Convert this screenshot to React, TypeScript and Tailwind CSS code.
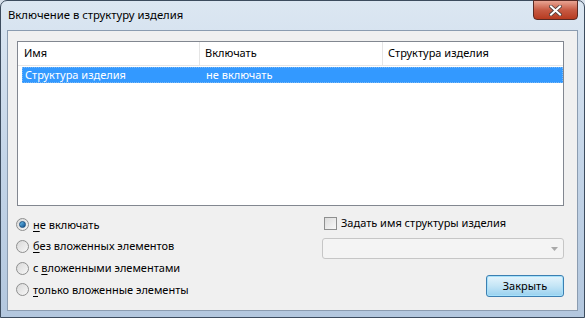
import React from 'react'

const font = { fontFamily: '"Noto Sans", "Open Sans", sans-serif' }

const Radio = ({ checked, label, u }: { checked?: boolean; label: string; u: number }) => (
    <div className="flex h-[21.7px] items-center">
        <div className="relative ml-[8px] size-[13px] rounded-full border border-[#8e8f8f] bg-gradient-to-br from-[#d9d9d9] to-[#f7f7f7]">
            {checked && (
                <div className="absolute left-[2px] top-[2px] size-[7px] rounded-full bg-gradient-to-br from-[#6dc3f0] to-[#0d4f8c] border border-[#1c5180]"></div>
            )}
        </div>
        <span className="ml-[4px] text-[11px] text-black">
            {label.slice(0, u)}
            <span className="underline underline-offset-2">{label[u]}</span>
            {label.slice(u + 1)}
        </span>
    </div>
)

const App = () => {
    return (
        <div className="relative h-[318px] w-[585px] overflow-hidden bg-[#d6dfea]" style={font}>
            <div className="absolute inset-0 rounded-t-[7px] border border-[#3d4c5e] bg-gradient-to-b from-[#dce7f2] via-[#c4d5e8] to-[#b3c7de]">
                {/* title bar */}
                <div className="flex h-[29px] items-center pl-[7px] text-[11.3px] text-black">
                    Включение в структуру изделия
                </div>
                <div className="absolute right-[6px] top-[-1px] flex h-[20px] w-[45px] items-center justify-center rounded-b-[4px] border border-[#5a2a24] bg-gradient-to-b from-[#e8a493] via-[#c75a43] to-[#b73a1f]">
                    <svg width="13" height="11" viewBox="0 0 13 11">
                        <path d="M2 1.5 L11 9.5 M11 1.5 L2 9.5" stroke="#4a3a38" strokeWidth="3.6" strokeLinecap="square" />
                        <path d="M2 1.5 L11 9.5 M11 1.5 L2 9.5" stroke="#ffffff" strokeWidth="2" strokeLinecap="square" />
                    </svg>
                </div>

                {/* client area */}
                <div className="ml-[6px] mr-[6px] flex h-[281px] flex-col border border-[#8b9cb0] bg-[#f0f0f0] pl-[9px] pr-[13px] pt-[10px]">
                    <div className="h-[165px] border border-[#828790] bg-white">
                        <div className="flex h-[24px] items-center border-b border-[#e5e5e5] text-[11px] text-black">
                            <div className="flex h-full w-[182px] items-center border-r border-[#e5e5e5] pl-[6px]">Имя</div>
                            <div className="flex h-full w-[183px] items-center border-r border-[#e5e5e5] pl-[5px]">Включать</div>
                            <div className="flex h-full flex-1 items-center pl-[5px]">Структура изделия</div>
                        </div>
                        <div className="ml-[4px] mr-[0px] mt-[1px] flex h-[16px] items-center border border-dotted border-[#7ab8f5] bg-[#3399ff] text-[11px] text-white">
                            <div className="w-[178px] pl-[2px]">Структура изделия</div>
                            <div className="pl-[5px]">не включать</div>
                        </div>
                    </div>

                    <div className="flex flex-1">
                        <div className="-ml-[9px] flex w-[314px] flex-col pt-[8px]">
                            <Radio checked label="не включать" u={0} />
                            <Radio label="без вложенных элементов" u={0} />
                            <Radio label="с вложенными элементами" u={2} />
                            <Radio label="только вложенные элементы" u={0} />
                        </div>
                        <div className="flex flex-1 flex-col pt-[10px]">
                            <div className="flex h-[14px] items-center pl-[2px]">
                                <div className="size-[13px] border border-[#8e8f8f] bg-gradient-to-br from-[#dcdcdc] to-[#f8f8f8]"></div>
                                <span className="ml-[4px] text-[11px] text-black">Задать имя структуры изделия</span>
                            </div>
                            <div className="mt-[8px] flex h-[21px] items-center justify-end rounded-[3px] border border-[#c6c6c6] bg-[#f4f4f4] pr-[5px]">
                                <svg width="7" height="4" viewBox="0 0 7 4">
                                    <path d="M0 0 H7 L3.5 4 Z" fill="#a9a9a9" />
                                </svg>
                            </div>
                            <div className="mt-[16px] flex justify-end">
                                <button className="flex h-[22px] w-[78px] items-center justify-center rounded-[3px] border border-[#3c7fb1] bg-gradient-to-b from-[#e5f4fc] via-[#c4e5f6] to-[#98d1ef] text-[11px] text-black shadow-[inset_0_0_0_1px_#a6e1fb]">
                                    Закрыть
                                </button>
                            </div>
                        </div>
                    </div>
                </div>
            </div>
        </div>
    )
}

export default App
